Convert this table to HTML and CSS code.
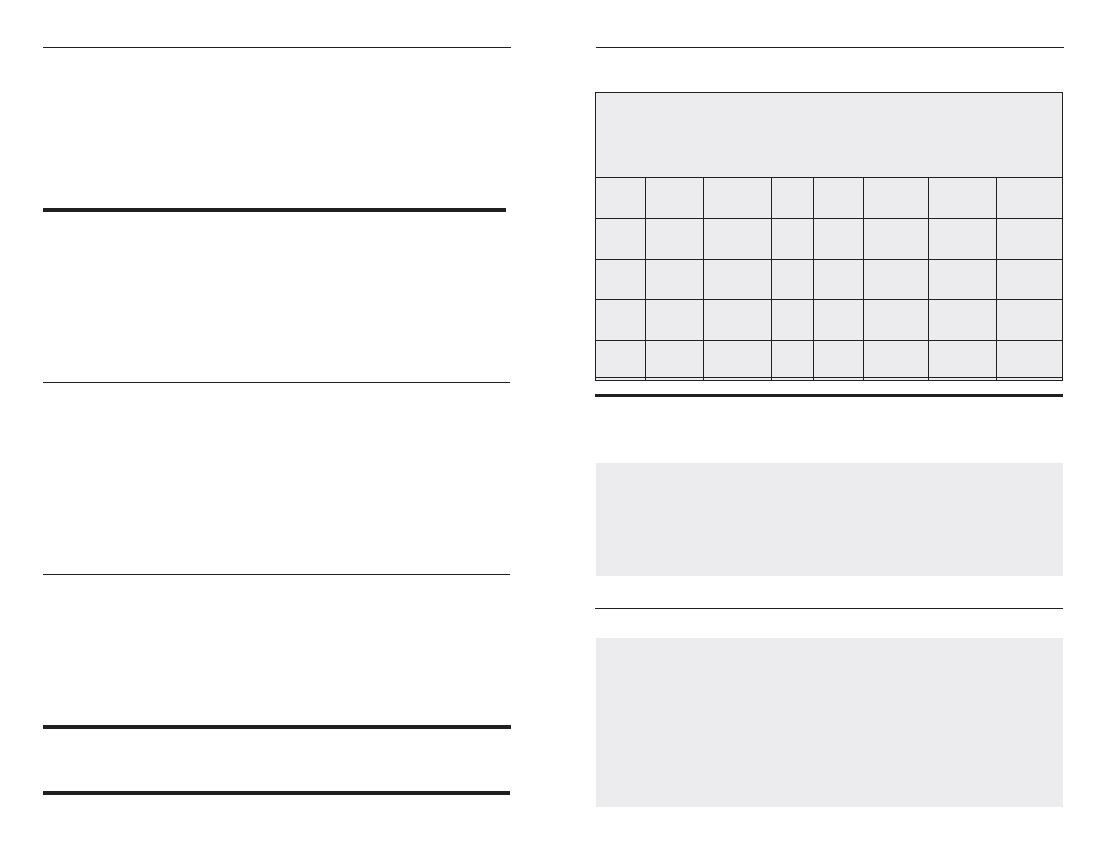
FILE: index.html
```html
<!DOCTYPE html>
<html lang="en">
<head>
<meta charset="utf-8">
<title>Layout</title>
<link rel="stylesheet" href="styles.css">
</head>
<body>
<div class="page">
  <div class="col col-left">
    <div class="rule thin w468 m47"></div>
    <div class="rule thick w463 m160"></div>
    <div class="rule thin w467 m170"></div>
    <div class="rule thin w467 m191"></div>
    <div class="rule thick w468 m150"></div>
    <div class="rule thick w467 m62"></div>
  </div>
  <div class="col col-right">
    <div class="rule thin w468 m47 ml1"></div>
    <div class="table">
      <div class="cell head"></div>
      <div class="cell"></div><div class="cell"></div><div class="cell"></div><div class="cell"></div><div class="cell"></div><div class="cell"></div><div class="cell"></div><div class="cell"></div>
      <div class="cell"></div><div class="cell"></div><div class="cell"></div><div class="cell"></div><div class="cell"></div><div class="cell"></div><div class="cell"></div><div class="cell"></div>
      <div class="cell"></div><div class="cell"></div><div class="cell"></div><div class="cell"></div><div class="cell"></div><div class="cell"></div><div class="cell"></div><div class="cell"></div>
      <div class="cell"></div><div class="cell"></div><div class="cell"></div><div class="cell"></div><div class="cell"></div><div class="cell"></div><div class="cell"></div><div class="cell"></div>
      <div class="cell"></div><div class="cell"></div><div class="cell"></div><div class="cell"></div><div class="cell"></div><div class="cell"></div><div class="cell"></div><div class="cell"></div>
      <div class="cell"></div><div class="cell"></div><div class="cell"></div><div class="cell"></div><div class="cell"></div><div class="cell"></div><div class="cell"></div><div class="cell"></div>
    </div>
    <div class="rule thick3 w468 m13"></div>
    <div class="panel panel-a"></div>
    <div class="rule thin w468 m32"></div>
    <div class="panel panel-b"></div>
  </div>
</div>
</body>
</html>
```
FILE: styles.css
```css
html, body {
  margin: 0;
  padding: 0;
  background: #ffffff;
  font-family: "Liberation Sans", Arial, sans-serif;
}

.page {
  display: flex;
  padding-left: 43px;
  gap: 84px;
  width: 1106px;
  height: 850px;
  box-sizing: border-box;
  overflow: hidden;
}

.col {
  display: flex;
  flex-direction: column;
  width: 468px;
  flex: none;
}

.rule {
  background: #221f20;
  flex: none;
}

.thin { height: 1px; }
.thick { height: 4px; }
.thick3 { height: 3px; }

.w463 { width: 463px; }
.w467 { width: 467px; }
.w468 { width: 468px; }

.ml1 { margin-left: 1px; }

.m13 { margin-top: 13px; }
.m32 { margin-top: 32px; }
.m47 { margin-top: 47px; }
.m62 { margin-top: 62px; }
.m150 { margin-top: 150px; }
.m160 { margin-top: 160px; }
.m170 { margin-top: 170px; }
.m191 { margin-top: 191px; }

.table {
  margin-top: 44px;
  display: grid;
  grid-template-columns: 49px 57px 67px 41px 49px 64px 67px 65px;
  grid-template-rows: 84px 40px 40px 39px 40px 36px 2px;
  gap: 1px;
  padding: 1px;
  background: #221f20;
  width: 468px;
  box-sizing: border-box;
}

.cell {
  background: #ececee;
}

.cell.head {
  grid-column: 1 / -1;
}

.panel {
  background: #ececee;
  width: 467px;
  margin-left: 1px;
}

.panel-a {
  margin-top: 66px;
  height: 113px;
}

.panel-b {
  margin-top: 29px;
  height: 169px;
}
```
